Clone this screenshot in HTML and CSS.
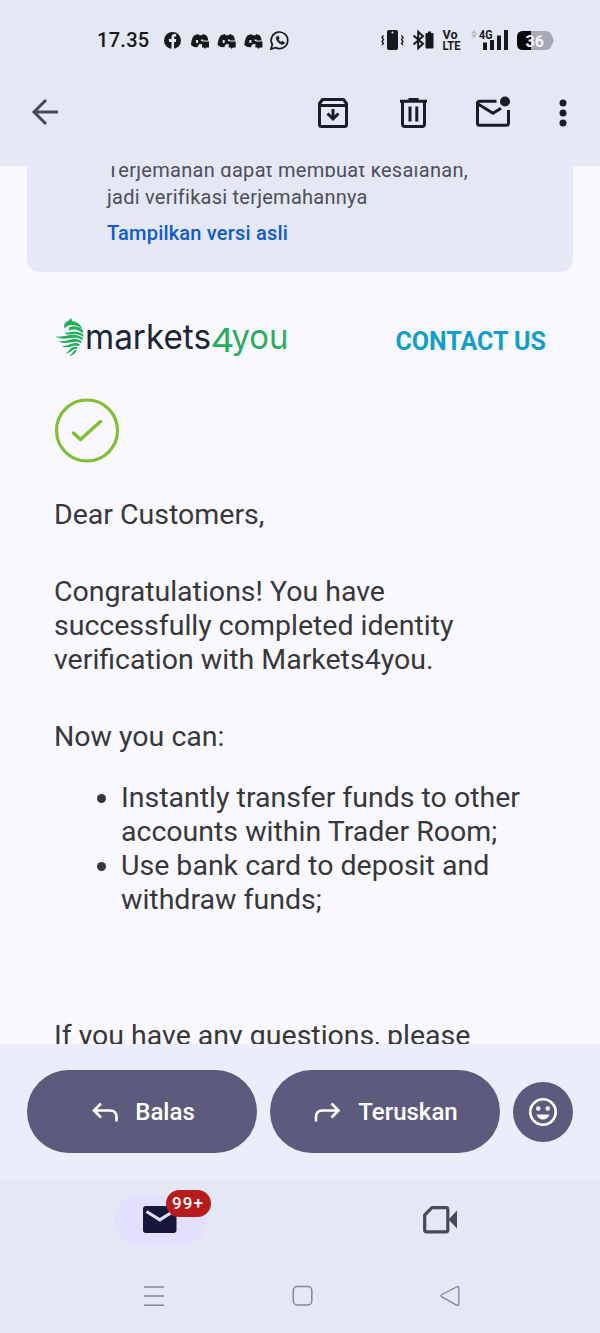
FILE: index.html
```html
<!DOCTYPE html>
<html lang="id">
<head>
<meta charset="utf-8">
<title>Mail</title>
<link rel="stylesheet" href="styles.css">
</head>
<body>
<div class="screen">
  <header class="top">
    <div class="status">
      <span class="clock">17.35</span>
      <svg class="status-left" width="130" height="24" viewBox="0 0 130 24">
        <circle cx="8.500" cy="12.500" r="8.500" fill="#17181c"/>
        <path d="M7.500 21.500V14H5v-3h2.500V9.200C7.500 6.700 8.800 5.700 12.200 6.100V8.500C10.500 8.400 10.100 8.700 10.100 9.800V11h2.200l-.4 3h-1.800v7.500z" fill="#e4e7f4"/>
        <g id="disc" fill="#17181c">
          <path d="M30 7.500 34 6l1 1.200h3L39 6l3.500 1.500q1.500 2 1.700 5H38.500v3.500l-3.500.2-1.500 3-3.500-.2-3-2c0-3.500 1-7 3-9.500z"/>
          <path d="M39 13.500h6v6h-2.700l-1.500 1.500-.6-1.500H38v-6z"/>
          <path d="M32 12h2v3h-2zM37.200 11.500h2V13h-2z" fill="#e4e7f4"/>
        </g>
        <use href="#disc" x="26.700"/>
        <use href="#disc" x="53.400"/>
        <g fill="none" stroke="#17181c" stroke-width="1.700">
          <path d="M107 21l1.300-4.500a8.300 8.300 0 1 1 3.200 3.100z"/>
          <path d="M112.400 9c-.6 3.500 3 7.300 6.800 7.300l1.500-1.600-2.300-1.400-1.200 1c-1.400-.5-2.400-1.500-2.900-2.900l.9-1-1-2.200z" stroke-width=".8" fill="#17181c"/>
        </g>
      </svg>
      <svg class="status-right" width="178" height="26" viewBox="0 0 178 26">
        <g fill="#17181c">
          <rect x="7" y="3" width="11" height="20" rx="2"/>
          <circle cx="12.500" cy="5.500" r="1" fill="#e4e7f4"/>
          <path d="M3.500 8.500 2 10.500l1.500 2-1.500 2 1.500 2L2 18M21.500 8.500l1.500 2-1.500 2 1.500 2-1.500 2 1.500 1.500" fill="none" stroke="#17181c" stroke-width="1.300"/>
          <path d="m33.500 8.500 9.500 8.300-4.800 4.400V4.800L43 9.200l-9.500 8.300" fill="none" stroke="#17181c" stroke-width="2"/>
          <path d="M48 4.500h3V6h1.500q1 0 1 1v13.500q0 1-1 1h-6q-1 0-1-1V7q0-1 1-1H48z"/>
          <g class="tiny">
            <text x="62.500" y="11.500" textLength="15" lengthAdjust="spacingAndGlyphs">Vo</text>
            <text x="62.500" y="22.800" textLength="18" lengthAdjust="spacingAndGlyphs">LTE</text>
            <text x="99" y="11.500" textLength="13.500" lengthAdjust="spacingAndGlyphs">4G</text>
          </g>
          <path d="m94 3 3 3.500h-6zM94 11l3-3.500h-6z" fill="#b9bbc9"/>
          <rect x="103" y="15.500" width="4" height="7.500"/>
          <rect x="110" y="13" width="4" height="10"/>
          <rect x="117" y="8.500" width="4" height="14.500"/>
          <rect x="124" y="3" width="4" height="20"/>
        </g>
        <rect x="137" y="4" width="35" height="19" rx="6" fill="#a7a8b5"/>
        <path d="M172 9.500q3 4 0 8z" fill="#a7a8b5"/>
        <path d="M151 4h-8q-6 0-6 6v7q0 6 6 6h8z" fill="#08090b"/>
        <text class="battery" x="145.500" y="19.500" textLength="18.500" lengthAdjust="spacingAndGlyphs">36</text>
      </svg>
    </div>
    <div class="appbar">
      <svg class="back" width="32" height="32" viewBox="0 0 32 32"><path d="M30 16H6M18 4 6 16l12 12" fill="none" stroke="#474858" stroke-width="3"/></svg>
      <div class="tools">
        <svg width="34" height="34" viewBox="0 0 34 34"><path d="M3.500 8.500v21q0 2 2 2h23q2 0 2-2v-21l-3-4h-21zM3.500 10.500h27" fill="none" stroke="#191b28" stroke-width="3" stroke-linejoin="round"/><path d="M17 14v9" stroke="#191b28" stroke-width="3"/><path d="m11.500 18.500 5.500 5.300 5.500-5.300" fill="none" stroke="#191b28" stroke-width="3"/></svg>
        <svg width="34" height="34" viewBox="0 0 34 34"><g fill="none" stroke="#191b28" stroke-width="3"><path d="M6.500 6v23q0 2.400 2.400 2.400h17.200q2.400 0 2.400-2.400V6M4 6.200h27M12.500 4.400h10"/><path d="M14 11.500v15M20.800 11.500v15"/></g></svg>
        <svg width="38" height="38" viewBox="0 0 38 38"><g fill="none" stroke="#191b28" stroke-width="3"><path d="M22.500 8.300H5.500q-2 0-2 2v20q0 2 2 2h27q2 0 2-2V17"/><path d="m4 11 15 9.300 8-5"/></g><circle cx="31" cy="8.500" r="5" fill="#191b28"/></svg>
        <svg width="10" height="34" viewBox="0 0 10 34" fill="#191b28"><circle cx="5" cy="8" r="3.500"/><circle cx="5" cy="18" r="3.500"/><circle cx="5" cy="28" r="3.500"/></svg>
      </div>
    </div>
  </header>

  <main class="mail">
    <section class="notice">
      <p class="notice-text"><span class="n1">Terjemahan dapat membuat kesalahan,</span><br><span class="n2">jadi verifikasi terjemahannya</span></p>
      <a class="original">Tampilkan versi asli</a>
    </section>
    <article class="letter">
      <div class="brand">
        <svg width="236" height="48" viewBox="0 0 236 48">
          <g fill="#27ae5c">
            <path d="M10.500 15.500C9.500 11 11 9 14 8L17.500 4.500C17 7 18 8 20.500 8.800 24.500 10 27 12 28.300 16 23 11.500 15 10 10.500 15.500z"/>
            <path d="M15 14.500C20 12 26 13.500 29 17.500V20.500C24 16 19 15.500 15 17.800z"/>
            <path d="M9.500 19.800C15 20.500 21 15.500 29.200 21.500V24C22 18.500 16 24 9.500 19.800z"/>
            <path d="M1 23.200C11 25.500 19 17.500 29 25L28.200 27.200C20 21 12 29.500 1 23.200z"/>
            <path d="M4 28C13 29.500 19 22.500 27.800 28.200L26.500 30.200C19 26 13 33.500 4 28z"/>
            <path d="M8 33C15 33.500 19 27.500 26 31.200L24.500 33.200C19 30.500 14.500 37 8 33z"/>
            <path d="M11 40.800C16 38 17 32 23.800 34.200L22.500 36.200C19 35 17.500 40 11 40.800zM15 43C19 40.500 19.500 36.500 22.800 36.800 22 40 19.500 42.500 15 43z"/>
          </g>
          <g class="word">
            <text class="dark" x="31" y="35.800" textLength="126" lengthAdjust="spacingAndGlyphs">markets</text>
            <text class="four" x="156.500" y="38.500" textLength="24" lengthAdjust="spacingAndGlyphs">4</text>
            <text x="177.500" y="35.800" textLength="57" lengthAdjust="spacingAndGlyphs">you</text>
          </g>
        </svg>
        <a class="contact">CONTACT US</a>
      </div>
      <svg class="check" width="66" height="66" viewBox="0 0 66 66" fill="none" stroke="#82be35" stroke-width="3.200" stroke-linecap="round" stroke-linejoin="round"><circle cx="33" cy="32.500" r="30.500"/><path d="m19.500 35 7 6.500L46.500 23.500" stroke-width="3.500"/></svg>
      <p>Dear Customers,</p>
      <p>Congratulations! You have<br>successfully completed identity<br>verification with Markets4you.</p>
      <p class="lead">Now you can:</p>
      <ul>
        <li>Instantly transfer funds to other<br>accounts within Trader Room;</li>
        <li>Use bank card to deposit and<br>withdraw funds;</li>
      </ul>
      <p>If you have any questions, please</p>
    </article>
  </main>

  <div class="actions">
    <button class="pill"><svg width="28" height="24" viewBox="0 0 28 24" fill="none" stroke="#fff" stroke-width="2.600"><path d="M26.500 21.500V17q0-6.500-6.500-6.500H4.500M11 3.500 4 10.500l7 7"/></svg><span class="reply">Balas</span></button>
    <button class="pill"><svg width="28" height="24" viewBox="0 0 28 24" fill="none" stroke="#fff" stroke-width="2.600"><path d="M3 21.500V17q0-6.500 6.500-6.500H25M18.500 3.500l7 7-7 7"/></svg><span class="forward">Teruskan</span></button>
    <button class="emoji"><svg width="30" height="30" viewBox="0 0 30 30" fill="#fff"><circle cx="15" cy="15" r="12.700" fill="none" stroke="#fff" stroke-width="2.600"/><circle cx="10.300" cy="11.500" r="2.200"/><circle cx="19.700" cy="11.500" r="2.200"/><path d="M8.500 17.500h13q-2 5-6.500 5t-6.500-5z"/></svg></button>
  </div>

  <footer class="bottom">
    <nav class="tabs">
      <div class="tab">
        <div class="active">
          <svg width="34" height="28" viewBox="0 0 34 28"><rect width="33.500" height="27" rx="3" fill="#16173a"/><path d="m3.500 5.500 13.300 8.300 13.300-8.300" fill="none" stroke="#e2dfff" stroke-width="3.200"/></svg>
          <span class="badge">99+</span>
        </div>
      </div>
      <div class="tab">
        <svg width="36" height="30" viewBox="0 0 36 30"><path d="M10 2.700h14q1.800 0 1.800 1.800v20.500q0 1.800-1.800 1.800H4.500q-1.800 0-1.800-1.800V10z" fill="none" stroke="#474858" stroke-width="3.200" stroke-linejoin="round"/><path d="m26.500 14.500 8.500-9v18z" fill="#474858"/></svg>
      </div>
    </nav>
    <div class="system">
      <svg width="20" height="22" viewBox="0 0 20 22" stroke="#858692" stroke-width="1.600"><path d="M0 2h20M0 11h20M0 20.300h20"/></svg>
      <svg width="22" height="22" viewBox="0 0 22 22" fill="none" stroke="#858692" stroke-width="1.500"><rect x="2.300" y="1.500" width="18.500" height="18.500" rx="4"/></svg>
      <svg width="20" height="22" viewBox="0 0 20 22" fill="none" stroke="#858692" stroke-width="1.400"><path d="M16.500 2 2 9.500q-2 1.200 0 2.400L16.500 20q2.300 1 2.300-1V3q0-2-2.300-1z"/></svg>
    </div>
  </footer>
</div>
</body>
</html>
```
FILE: styles.css
```css
* { box-sizing: border-box; }
body { margin: 0; font-family: Roboto, "Liberation Sans", sans-serif; }
p, ul { margin: 0; padding: 0; }
svg { display: block; flex: none; }
button { border: 0; padding: 0; font: inherit; }

.screen { width: 600px; height: 1333px; display: flex; flex-direction: column; overflow: hidden; background: #f9f8ff; }
.top { height: 166px; flex: none; background: #e4e7f4; }
.status { height: 72px; padding: 8px 42px 0 97px; display: flex; align-items: center; }
.clock { width: 67px; font-size: 20px; font-weight: 500; letter-spacing: .3px; color: #17181c; }
.status-right { margin-left: auto; }
.tiny { font-size: 12px; font-weight: 700; }
.battery { font-size: 17px; font-weight: 700; fill: #f4f4fa; }
.appbar { height: 80px; padding: 0 32px 0 28px; display: flex; align-items: center; justify-content: space-between; }
.tools { display: flex; align-items: center; gap: 46px; }
.tools svg:nth-child(2) { margin-right: -2px; }

.mail { flex: 1; min-height: 0; overflow: hidden; }
.notice { margin: -10px 27px 0; height: 116px; padding: 1px 80px; border-radius: 0 0 13px 13px; background: #e4e7f4; }
.notice-text { font-size: 20px; line-height: 26.500px; color: #4d4e5b; white-space: nowrap; }
.n1 { letter-spacing: .3px; }
.n2 { letter-spacing: .25px; }
.original { display: block; margin-top: 10px; font-size: 20px; line-height: 26px; font-weight: 500; letter-spacing: .2px; color: #1059cc; }

.letter { padding: 41px 54px 0; font-size: 28.500px; line-height: 34px; color: #37373b; white-space: nowrap; }
.brand { display: flex; justify-content: space-between; height: 48px; }
.word { font-family: Inter, sans-serif; font-size: 34px; font-weight: 400; fill: #27ae5c; }
.word .dark { fill: #1b2438; }
.word .four { font-size: 33px; }
.contact { margin-top: 12px; font-size: 25px; font-weight: 700; color: #119fca; }
.check { margin: 37px 0 34px; }
.letter p { margin-bottom: 43px; }
.letter .lead { margin-bottom: 27px; }
.letter ul { padding-left: 67px; margin-bottom: 102px; }

.actions { height: 136px; flex: none; display: flex; align-items: center; gap: 13px; padding: 0 27px 1px; background: #ebedfa; }
.pill { width: 230px; height: 83px; flex: none; display: flex; align-items: center; justify-content: center; gap: 17px; padding-left: 1px; border-radius: 42px; background: #5d5b7d; color: #fff; font-size: 24px; font-weight: 500; }
.emoji { width: 60px; height: 60px; flex: none; display: flex; align-items: center; justify-content: center; border-radius: 50%; background: #5d5b7d; }

.bottom { height: 153px; flex: none; background: #e4e7f4; }
.tabs { height: 79px; display: flex; padding: 0 20px; }
.tab { flex: 1; display: flex; align-items: center; justify-content: center; }
.active { position: relative; width: 93px; height: 50px; display: flex; align-items: center; justify-content: center; border-radius: 25px; background: #e2dfff; }
.badge { position: absolute; left: 52px; top: -5px; width: 45px; height: 27px; border-radius: 14px; background: #b71b1c; color: #fff; font-size: 17px; line-height: 27px; font-weight: 500; letter-spacing: 1px; text-align: center; }
.system { height: 73px; padding: 0 140px 0 144px; display: flex; justify-content: space-between; align-items: center; }
```
